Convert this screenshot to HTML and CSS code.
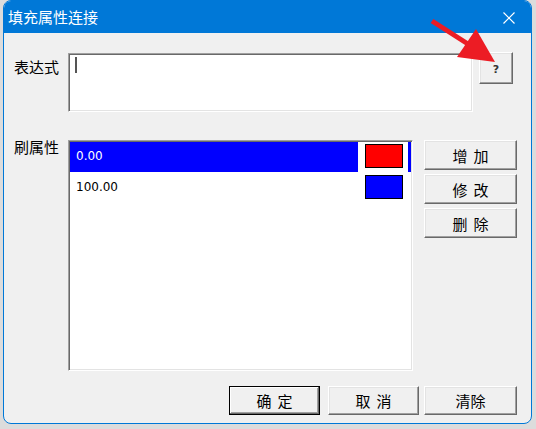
FILE: index.html
```html
<!DOCTYPE html>
<html lang="zh-CN">
<head>
  <meta charset="UTF-8">
  <title>填充属性连接</title>
  <link rel="stylesheet" href="styles.css">
</head>
<body>
  <div class="window">
    <div class="titlebar">
      <span class="title">填充属性连接</span>
      <span class="close">
        <svg width="12" height="12" viewBox="0 0 12 12"><path d="M0.5 0.5 L11.5 11.5 M11.5 0.5 L0.5 11.5" stroke="#fff" stroke-width="1.2"/></svg>
      </span>
    </div>

    <div class="content">
      <div class="row expr-row">
        <label class="field-label first">表达式</label>
        <div class="textbox sunken"><span class="caret"></span></div>
        <button class="btn help-btn">?</button>
      </div>

      <div class="row list-row">
        <label class="field-label">刷属性</label>
        <div class="listbox sunken">
          <div class="item selected">
            <span>0.00</span>
            <span class="swatch-cell"><span class="swatch red"></span></span>
          </div>
          <div class="item">
            <span>100.00</span>
            <span class="swatch-cell"><span class="swatch blue"></span></span>
          </div>
        </div>
        <div class="side-buttons">
          <button class="btn side-btn spaced">增加</button>
          <button class="btn side-btn spaced">修改</button>
          <button class="btn side-btn spaced">删除</button>
        </div>
      </div>

      <div class="row footer">
        <button class="btn foot-btn default spaced">确定</button>
        <button class="btn foot-btn spaced cancel">取消</button>
        <button class="btn foot-btn clear">清除</button>
      </div>
    </div>
  </div>

  <!-- red annotation arrow drawn over the dialog -->
  <svg class="arrow" width="536" height="429" viewBox="0 0 536 429">
    <line x1="432" y1="21" x2="468" y2="44" stroke="#ec1c24" stroke-width="5"/>
    <polygon points="476,29 457,57 495,62" fill="#ec1c24"/>
  </svg>
</body>
</html>
```

FILE: styles.css
```css
body {
  margin: 0;
  width: 536px;
  height: 429px;
  overflow: hidden;
  background-color: #dcdcdc;
  font-family: "Noto Sans CJK SC", "Liberation Sans", sans-serif;
  position: relative;
}
.window {
  margin-left: 3px;
  width: 529px;
  height: 424px;
  box-sizing: border-box;
  border: 1px solid #0078d7;
  border-radius: 8px;
  background-color: #f0f0f0;
  overflow: hidden;
}
.titlebar {
  height: 32px;
  background-color: #0078d7;
  display: flex;
  align-items: center;
  padding-left: 4px;
  color: #fff;
}
.title {
  font-size: 15px;
  line-height: 18px;
}
.close {
  margin-left: auto;
  width: 44px;
  display: flex;
  justify-content: center;
  padding-top: 1px;
}
.content {
  padding: 19px 0 0 10px;
}
.row {
  display: flex;
}
.field-label {
  width: 54px;
  font-size: 15px;
  line-height: 14px;
  color: #000;
}
.field-label.first {
  padding-top: 8px;
}
.sunken {
  box-sizing: border-box;
  background-color: #fff;
  border-style: solid;
  border-width: 1px;
  border-color: #a0a0a0 #fff #fff #a0a0a0;
  box-shadow: inset 1px 1px 0 #696969, inset -1px -1px 0 #e3e3e3;
}
.textbox {
  margin-top: 1px;
  width: 405px;
  height: 59px;
  padding: 3px 0 0 6px;
}
.caret {
  display: block;
  width: 2px;
  height: 16px;
  background-color: #555;
}
.btn {
  box-sizing: border-box;
  background-color: #f0f0f0;
  border-style: solid;
  border-width: 1px;
  border-color: #fff #696969 #696969 #fff;
  box-shadow: inset -1px -1px 0 #a0a0a0, inset 1px 1px 0 #e3e3e3;
  font-family: "Noto Sans CJK SC", sans-serif;
  font-size: 15px;
  color: #000;
  padding: 0;
}
.spaced {
  letter-spacing: 6px;
  text-indent: 6px;
}
.help-btn {
  margin-left: 6px;
  width: 34px;
  height: 32px;
  font-family: "DejaVu Sans", sans-serif;
  font-size: 11px;
  font-weight: bold;
  color: #333;
  padding-top: 2px;
}
.list-row {
  margin-top: 28px;
}
.listbox {
  width: 345px;
  height: 231px;
  padding: 1px;
  font-family: "DejaVu Sans", sans-serif;
  font-size: 12px;
}
.item {
  height: 30px;
  display: flex;
  align-items: center;
  justify-content: space-between;
  padding: 0 3px 0 6px;
  margin-bottom: 1px;
  color: #000;
}
.item span:first-child {
  margin-top: -3px;
}
.item.selected {
  background-color: #0000ff;
  color: #fff;
}
.swatch-cell {
  width: 50px;
  height: 30px;
  background-color: #fff;
  display: flex;
  align-items: center;
  justify-content: center;
}
.swatch {
  display: block;
  width: 38px;
  height: 24px;
  box-sizing: border-box;
  border: 1px solid #000;
  margin-left: 1px;
}
.swatch.red {
  background-color: #ff0000;
}
.swatch.blue {
  background-color: #0000ff;
}
.side-buttons {
  margin-left: 11px;
  display: flex;
  flex-direction: column;
  gap: 4px;
}
.side-btn {
  width: 93px;
  height: 30px;
}
.footer {
  justify-content: flex-end;
  padding-right: 14px;
  margin-top: 15px;
  gap: 8px;
}
.foot-btn {
  width: 91px;
  height: 29px;
}
.foot-btn.default {
  border-color: #000;
  box-shadow: inset -1px -1px 0 #696969, inset 1px 1px 0 #fff, inset -2px -2px 0 #a0a0a0;
}
.foot-btn.clear {
  width: 93px;
  margin-left: -3px;
}
.arrow {
  position: absolute;
  left: 0;
  top: 0;
  pointer-events: none;
}
```
